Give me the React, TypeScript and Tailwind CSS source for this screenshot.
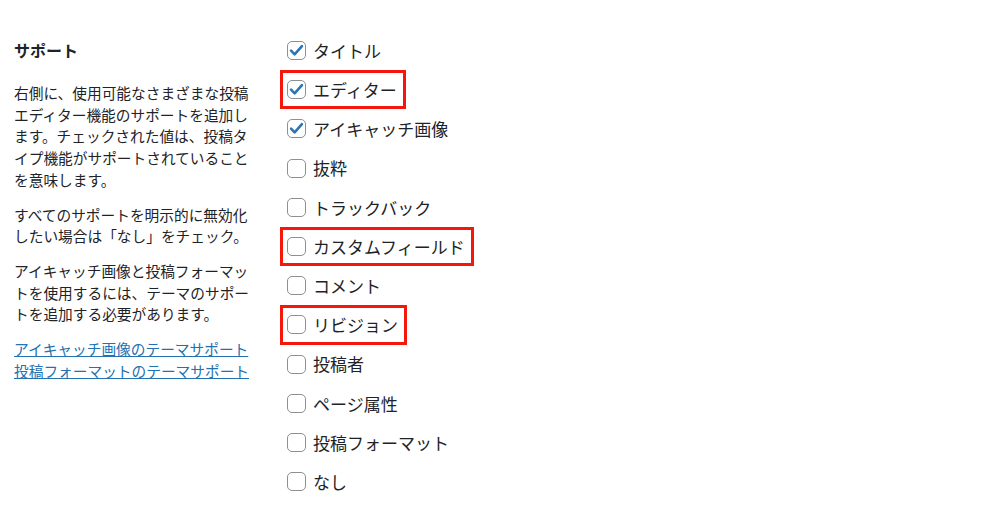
import React from 'react';

// Support options list with a few rows outlined in red (screenshot annotation).
const OPTIONS: { label: string; checked: boolean; marked?: boolean }[] = [
  { label: 'タイトル', checked: true },
  { label: 'エディター', checked: true, marked: true },
  { label: 'アイキャッチ画像', checked: true },
  { label: '抜粋', checked: false },
  { label: 'トラックバック', checked: false },
  { label: 'カスタムフィールド', checked: false, marked: true },
  { label: 'コメント', checked: false },
  { label: 'リビジョン', checked: false, marked: true },
  { label: '投稿者', checked: false },
  { label: 'ページ属性', checked: false },
  { label: '投稿フォーマット', checked: false },
  { label: 'なし', checked: false },
];

function Box({ checked }: { checked: boolean }) {
  return (
    <span className="flex h-[19px] w-[19px] shrink-0 items-center justify-center rounded-[5px] border border-[#8c8f94] bg-white">
      {checked && (
        <svg viewBox="0 0 20 20" className="h-[17px] w-[17px]">
          <path d="M3.6 10.2l4.2 4.3L16.4 4.8" fill="none" stroke="#2a74b5" strokeWidth="3" strokeLinecap="round" strokeLinejoin="round" />
        </svg>
      )}
    </span>
  );
}

export default function App() {
  return (
    <div
      className="flex min-h-[527px] w-[1000px] bg-white pt-[38px] text-[#1d2327]"
      style={{ fontFamily: '"Noto Sans CJK JP", "Noto Sans", sans-serif' }}
    >
      <div className="w-[274px] shrink-0 pl-[14px]">
        <h2 className="text-[16px] font-bold leading-6">サポート</h2>
        <div className="mt-[20px] w-[240px] space-y-[13px] text-[14.7px] leading-[21.7px]">
          <p>右側に、使用可能なさまざまな投稿エディター機能のサポートを追加します。チェックされた値は、投稿タイプ機能がサポートされていることを意味します。</p>
          <p>すべてのサポートを明示的に無効化したい場合は「なし」をチェック。</p>
          <p>アイキャッチ画像と投稿フォーマットを使用するには、テーマのサポートを追加する必要があります。</p>
          <p>
            <a className="text-[#2271b1] underline" href="#">アイキャッチ画像のテーマサポート</a>
            <br />
            <a className="text-[#2271b1] underline" href="#">投稿フォーマットのテーマサポート</a>
          </p>
        </div>
      </div>
      <div className="-mt-[7px] flex flex-col items-start pl-[6px]">
        {OPTIONS.map((o) => (
          <label
            key={o.label}
            className={`flex h-[39.2px] items-center gap-[7px] border-[3px] pl-[4px] pr-[6px] text-[17px] ${
              o.marked ? 'border-[#f5160c]' : 'border-transparent'
            }`}
          >
            <Box checked={o.checked} />
            <span>{o.label}</span>
          </label>
        ))}
      </div>
    </div>
  );
}
